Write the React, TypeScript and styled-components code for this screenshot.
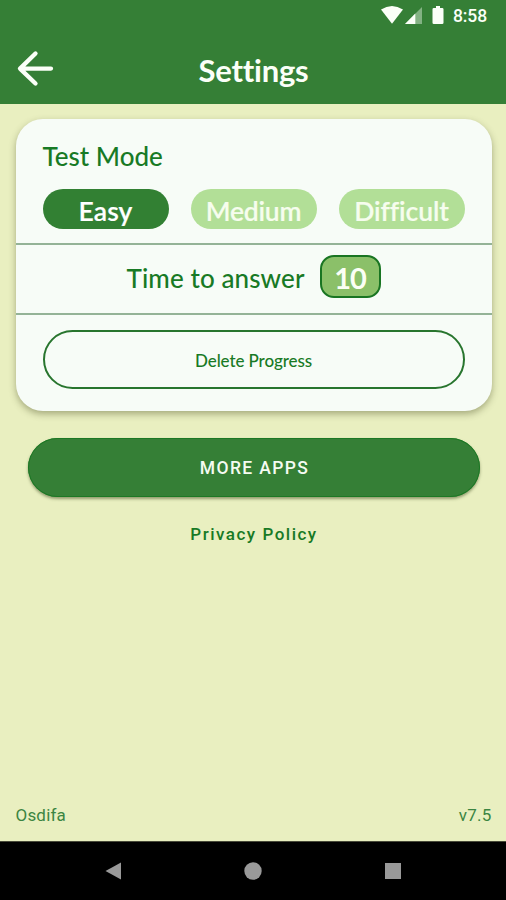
import React from "react";
import styled, { createGlobalStyle } from "styled-components";

const GlobalStyle = createGlobalStyle`
  * { box-sizing: border-box; }
  body { margin: 0; background: #e9efc0; }
  button { font: inherit; margin: 0; padding: 0; border: 0; background: none; }
`;

const Screen = styled.div`
  width: 506px;
  height: 900px;
  display: flex;
  flex-direction: column;
  overflow: hidden;
  background: #e9efc0;
  color: #187a25;
  font-family: Lato, "Open Sans", sans-serif;
  font-variant-ligatures: none;
`;

const Top = styled.header`
  height: 104px;
  flex: none;
  background: #357f36;
  color: #fbfff8;
`;

const StatusBar = styled.div`
  height: 32px;
  display: flex;
  justify-content: flex-end;
  padding-right: 19px;
`;

const StatusIcons = styled.svg`
  width: 66px;
  height: 32px;
  margin-right: 6px;
`;

const Clock = styled.span`
  font: 500 17.5px/32px Roboto, sans-serif;
  letter-spacing: -0.1px;
`;

const TitleBar = styled.div`
  height: 72px;
  display: grid;
  grid-template-columns: 70px 1fr 70px;
`;

const BackButton = styled.button`
  color: inherit;
  display: flex;
  padding: 18px 0 0 16px;
`;

const Title = styled.h1`
  margin: 0;
  padding: 18px 0 0 1px;
  text-align: center;
  font-size: 31px;
  line-height: 40px;
  font-weight: 700;
  letter-spacing: -0.25px;
`;

const Main = styled.main`
  flex: 1;
  display: flex;
  flex-direction: column;
  padding: 15px 14.5px 0 15.5px;
`;

const Card = styled.section`
  height: 291.5px;
  border-radius: 27px;
  background: #f7fcf7;
  box-shadow: 0 3px 7px rgba(70, 75, 30, 0.42);
`;

const ModeSection = styled.div`
  height: 124px;
  padding: 17px 27px 0;
`;

const Label = styled.span<{ $spacing: number }>`
  display: block;
  font-size: 26px;
  line-height: 40px;
  font-weight: 500;
  letter-spacing: ${(p) => p.$spacing}px;
  white-space: nowrap;
`;

const Modes = styled.div`
  display: flex;
  justify-content: space-between;
  margin-top: 13px;
`;

const Mode = styled.button<{ $active?: boolean; $spacing: number }>`
  width: 126px;
  height: 40px;
  padding-top: 4px;
  border-radius: 20px;
  background: ${(p) => (p.$active ? "#328033" : "#b2df97")};
  color: ${(p) => (p.$active ? "#ffffff" : "#f6fdee")};
  -webkit-text-stroke: 0.2px currentColor;
  font-size: 26.5px;
  line-height: 36px;
  font-weight: 600;
  letter-spacing: ${(p) => p.$spacing}px;
`;

const TimeSection = styled.div`
  height: 72px;
  display: flex;
  padding: 10px 0 0 111px;
  border: solid #94b397;
  border-width: 2px 0;
`;

const TimeLabel = styled(Label)`
  padding-top: 3px;
`;

const TimeValue = styled.button`
  width: 61px;
  height: 43px;
  margin-left: auto;
  margin-right: 111px;
  padding-top: 2px;
  border: 2px solid #197522;
  border-radius: 14px;
  background: #8bc069;
  color: #fbfff5;
  font-size: 29px;
  line-height: 37px;
  font-weight: 700;
  letter-spacing: -1px;
`;

const DeleteButton = styled.button`
  display: block;
  width: 422px;
  height: 59px;
  margin: 14.5px 0 0 27px;
  padding-top: 2px;
  border: 2px solid #28752e;
  border-radius: 30px;
  color: #187a25;
  font-size: 17px;
  line-height: 53px;
  font-weight: 500;
  letter-spacing: -0.1px;
`;

const MoreButton = styled.button`
  height: 59px;
  margin: 27.5px 12px 0;
  border-radius: 30px;
  background: #357f36;
  color: #f4fbf2;
  box-shadow: inset 0 0 0 1px #1c7824, 0 2px 3px rgba(60, 75, 30, 0.5);
  font: 500 17.5px/60px Roboto, sans-serif;
  letter-spacing: 1.35px;
  padding-left: 2px;
`;

const PolicyLink = styled.a`
  margin-top: 25px;
  padding-left: 1px;
  text-align: center;
  font: 500 17px/24px Roboto, sans-serif;
  letter-spacing: 1.5px;
`;

const Footer = styled.footer`
  display: flex;
  justify-content: space-between;
  margin-top: auto;
  padding-bottom: 14px;
  color: #3b8542;
  font: 400 17px/24px Roboto, sans-serif;
  letter-spacing: 0.2px;
`;

const NavBar = styled.nav`
  height: 59px;
  flex: none;
  display: flex;
  justify-content: space-between;
  align-items: center;
  padding: 0 103px;
  background: #000;
  border-top: 1px solid #484a39;
`;

const modes = [
  { name: "Easy", active: true, spacing: 0.1 },
  { name: "Medium", active: false, spacing: -0.2 },
  { name: "Difficult", active: false, spacing: -0.1 },
];

export default function App() {
  return (
    <Screen>
      <GlobalStyle />
      <Top>
        <StatusBar>
          <StatusIcons viewBox="0 0 66 32" fill="currentColor">
            <path d="M0 9.5Q11 2.5 22 9.5L11 23.7Z" />
            <path d="M24 24L41 7V24Z" opacity=".4" />
            <path d="M24 24L34.3 13.5V24Z" />
            <path d="M55 6h4v2h2.2q1.3 0 1.3 1.3v13.4q0 1.3-1.3 1.3h-8.4q-1.3 0-1.3-1.3V9.3q0-1.3 1.3-1.3H55Z" />
          </StatusIcons>
          <Clock>8:58</Clock>
        </StatusBar>
        <TitleBar>
          <BackButton aria-label="Back">
            <svg width="38" height="38" viewBox="0 0 38 38" fill="none" stroke="currentColor" strokeWidth="4.3" strokeLinecap="round" strokeLinejoin="round">
              <path d="M19.5 3.5L4 18.6L19.5 33.5M4 18.6H35" />
            </svg>
          </BackButton>
          <Title>Settings</Title>
        </TitleBar>
      </Top>
      <Main>
        <Card>
          <ModeSection>
            <Label $spacing={0}>Test Mode</Label>
            <Modes>
              {modes.map((m) => (
                <Mode key={m.name} $active={m.active} $spacing={m.spacing}>
                  {m.name}
                </Mode>
              ))}
            </Modes>
          </ModeSection>
          <TimeSection>
            <TimeLabel $spacing={0.1}>Time to answer</TimeLabel>
            <TimeValue>10</TimeValue>
          </TimeSection>
          <DeleteButton>Delete Progress</DeleteButton>
        </Card>
        <MoreButton>MORE APPS</MoreButton>
        <PolicyLink>Privacy Policy</PolicyLink>
        <Footer>
          <span>Osdifa</span>
          <span>v7.5</span>
        </Footer>
      </Main>
      <NavBar>
        <svg width="20" height="20" viewBox="0 0 20 20" fill="#999">
          <path d="M2.5 10L18 1.5V18.5Z" />
        </svg>
        <svg width="20" height="20" viewBox="0 0 20 20" fill="#999">
          <circle cx="10" cy="10" r="8.7" />
        </svg>
        <svg width="20" height="20" viewBox="0 0 20 20" fill="#999">
          <path d="M2 2h16v16H2Z" />
        </svg>
      </NavBar>
    </Screen>
  );
}
